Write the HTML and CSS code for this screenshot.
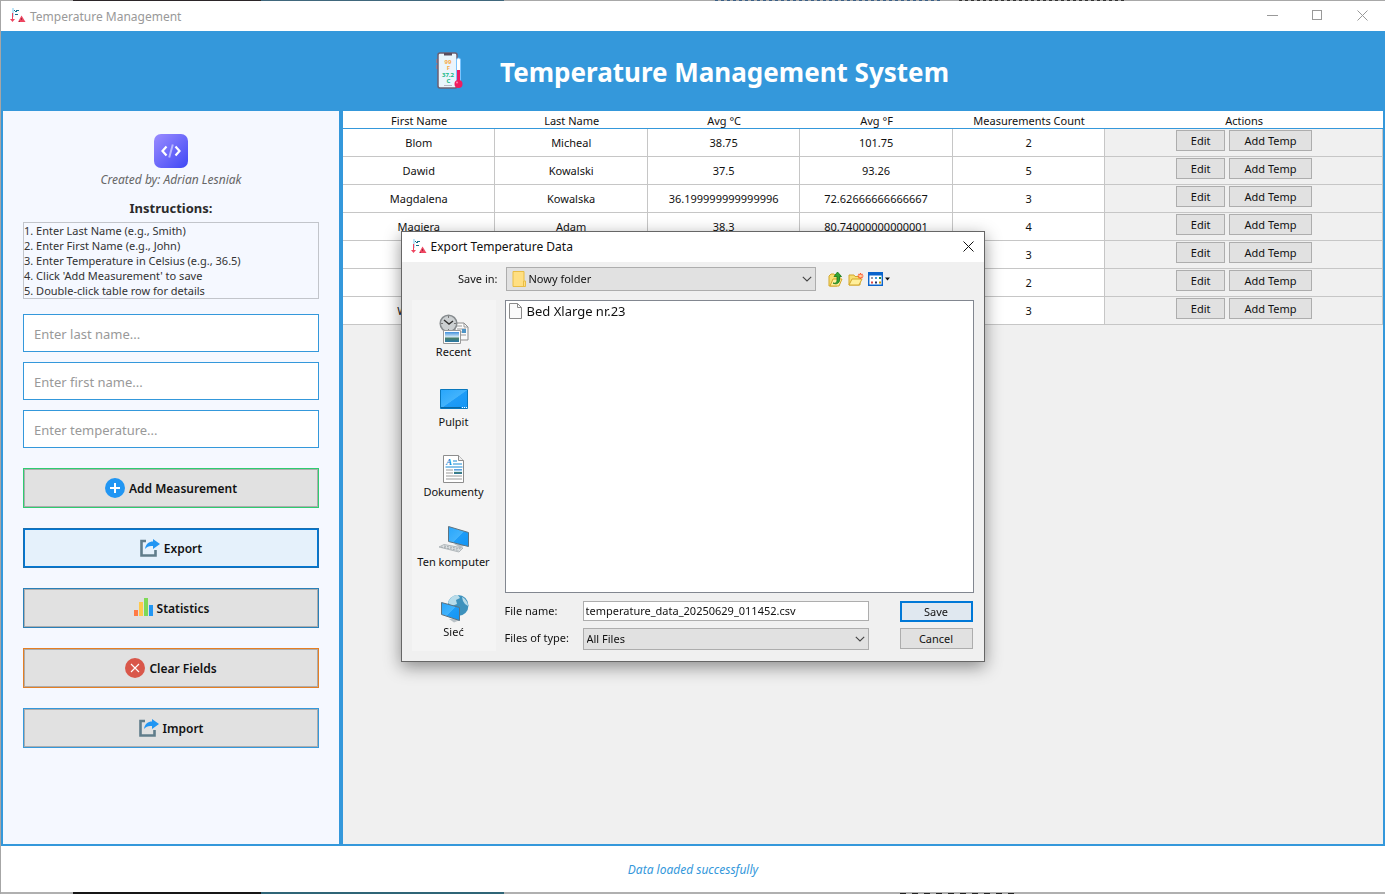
FILE: index.html
```html
<!DOCTYPE html>
<html lang="en">
<head>
<meta charset="utf-8">
<title>Temperature Management</title>
<link rel="stylesheet" href="styles.css">
</head>
<body>
<svg class="defs" aria-hidden="true">
  <symbol id="app" viewBox="0 0 16 16">
    <rect x="2" y="0" width="2" height="9" fill="#bfe6f8"/><rect x="2" y="5" width="1" height="7" fill="#ee4560"/><path d="M0 11h5l-2.500 3z" fill="#ee4560"/>
    <path d="M4 2h1v1H4zM6 2h3v1H6zM5 3h2v1H5zM5 6h3v1H5z" fill="#17708a"/><path d="M8 14l3.500-6.500L15.500 14z" fill="#ee4560"/><path d="M11 10h1v2h-1zM9 13h1v1H9z" fill="#a12c44"/>
  </symbol>
  <symbol id="share" viewBox="0 0 20 20">
    <path d="M6 3H1.500v14.500h14V12" fill="none" stroke="#607d8b" stroke-width="2.600"/>
    <path d="M5 11C6 5.500 9 3.500 13 3.500V1l7 5-7 5V8C9.500 7.500 7 8.500 5 11z" fill="#2196f3"/>
  </symbol>
  <symbol id="x" viewBox="0 0 11 11"><path d="M.5.5l10 10M10.500.5l-10 10" fill="none" stroke="currentColor"/></symbol>
  <symbol id="chevron" viewBox="0 0 10 6"><path d="M.8.8L5 5 9.200.8" fill="none" stroke="#444" stroke-width="1.100"/></symbol>
  <linearGradient id="blue" x1="0" y1="0" x2="1" y2="1"><stop offset="0" stop-color="#27a5fb"/><stop offset=".5" stop-color="#42b3fc"/><stop offset=".52" stop-color="#1e9cf7"/><stop offset="1" stop-color="#1295f5"/></linearGradient>
  <linearGradient id="photo" x1="0" y1="0" x2="0" y2="1"><stop offset="0" stop-color="#3f8fdc"/><stop offset=".5" stop-color="#d7ebf5"/><stop offset=".6" stop-color="#4c8068"/><stop offset="1" stop-color="#2a78a8"/></linearGradient>
</svg>

<div class="window">
  <div class="titlebar">
    <svg class="app-icon"><use href="#app"/></svg>
    <span class="titlebar-text">Temperature Management</span>
    <button class="caption" aria-label="Minimize"><svg viewBox="0 0 11 11"><path d="M0 5.500h11" stroke="currentColor"/></svg></button>
    <button class="caption" aria-label="Maximize"><svg viewBox="0 0 11 11"><rect x=".5" y=".5" width="9" height="9" fill="none" stroke="currentColor"/></svg></button>
    <button class="caption" aria-label="Close"><svg><use href="#x"/></svg></button>
  </div>

  <header class="banner">
    <svg class="banner-icon" viewBox="0 0 28 38">
      <rect x="0" y="7" width="3" height="4" fill="#8c7f96"/><rect x="0" y="13" width="3" height="4" fill="#8c7f96"/>
      <rect x="2" y="1" width="19" height="35" rx="2" fill="#eaf5fc" stroke="#6d5f70" stroke-width="1.500"/>
      <path d="M8 1h8v2.500H8z" fill="#5a4c5c"/>
      <g font-family="Noto Sans" font-weight="700" text-anchor="middle"><text x="12" y="12" font-size="6" fill="#f6a945">99</text><text x="12.500" y="18" font-size="6" fill="#f6a945">F</text><text x="12" y="24.500" font-size="6" fill="#12b886">37.2</text><text x="12.500" y="31" font-size="6" fill="#12b886">C</text></g>
      <path d="M8 33.500h8" stroke="#b9b5c4"/>
      <rect x="20.500" y="6" width="4" height="26" rx="2" fill="#fff" stroke="#79c4ff"/><rect x="21" y="18" width="3" height="14" fill="#e91e63"/><circle cx="22.500" cy="32" r="4" fill="#f01c5f"/><circle cx="21" cy="30.500" r="1" fill="#ff86aa"/>
    </svg>
    <h1>Temperature Management System</h1>
  </header>

  <div class="main">
    <aside class="sidebar">
      <svg class="logo" viewBox="0 0 34 34">
        <linearGradient id="purple" x1="0" y1="0" x2="1" y2="1"><stop offset="0" stop-color="#9b8cff"/><stop offset="1" stop-color="#3f48f5"/></linearGradient>
        <rect width="34" height="34" rx="7" fill="url(#purple)"/>
        <path d="M12.500 12.500L8.500 17l4 4.500M21.500 12.500l4 4.500-4 4.500" fill="none" stroke="#fff" stroke-width="2.200"/><path d="M18.800 10.500l-3.600 13" stroke="#b9b8ff" stroke-width="2"/>
      </svg>
      <p class="author">Created by: Adrian Lesniak</p>
      <h2>Instructions:</h2>
      <div class="instructions">1. Enter Last Name (e.g., Smith)<br>2. Enter First Name (e.g., John)<br>3. Enter Temperature in Celsius (e.g., 36.5)<br>4. Click 'Add Measurement' to save<br>5. Double-click table row for details</div>
      <div class="fields">
        <input type="text" aria-label="Last name" placeholder="Enter last name...">
        <input type="text" aria-label="First name" placeholder="Enter first name...">
        <input type="text" aria-label="Temperature" placeholder="Enter temperature...">
      </div>
      <div class="commands">
        <button class="command add"><svg viewBox="0 0 20 20"><circle cx="10" cy="10" r="10" fill="#2196f3"/><path d="M10 5v10M5 10h10" stroke="#fff" stroke-width="2"/></svg>Add Measurement</button>
        <button class="command export"><svg><use href="#share"/></svg>Export</button>
        <button class="command stats"><svg viewBox="0 0 20 20"><rect x="1" y="12" width="4" height="6" fill="#ff7a45"/><rect x="6" y="4" width="4" height="14" fill="#ffc94d"/><rect x="11" y="0" width="4" height="18" fill="#7ed957"/><rect x="16" y="7" width="4" height="11" fill="#2196f3"/></svg>Statistics</button>
        <button class="command clear"><svg viewBox="0 0 20 20"><circle cx="10" cy="10" r="10" fill="#d9574a"/><path d="M6 6l8 8M14 6l-8 8" stroke="#fff" stroke-width="1.100"/></svg>Clear Fields</button>
        <button class="command import"><svg><use href="#share"/></svg>Import</button>
      </div>
    </aside>

    <section class="records">
      <table>
        <colgroup><col class="data"><col class="data"><col class="data"><col class="data"><col class="data"><col></colgroup>
        <thead><tr><th>First Name</th><th>Last Name</th><th>Avg °C</th><th>Avg °F</th><th>Measurements Count</th><th>Actions</th></tr></thead>
        <tbody>
          <tr><td>Blom</td><td>Micheal</td><td>38.75</td><td>101.75</td><td>2</td><td class="actions"><div><button>Edit</button><button>Add Temp</button></div></td></tr>
          <tr><td>Dawid</td><td>Kowalski</td><td>37.5</td><td>93.26</td><td>5</td><td class="actions"><div><button>Edit</button><button>Add Temp</button></div></td></tr>
          <tr><td>Magdalena</td><td>Kowalska</td><td>36.199999999999996</td><td>72.62666666666667</td><td>3</td><td class="actions"><div><button>Edit</button><button>Add Temp</button></div></td></tr>
          <tr><td>Magiera</td><td>Adam</td><td>38.3</td><td>80.74000000000001</td><td>4</td><td class="actions"><div><button>Edit</button><button>Add Temp</button></div></td></tr>
          <tr><td></td><td></td><td></td><td></td><td>3</td><td class="actions"><div><button>Edit</button><button>Add Temp</button></div></td></tr>
          <tr><td></td><td></td><td></td><td></td><td>2</td><td class="actions"><div><button>Edit</button><button>Add Temp</button></div></td></tr>
          <tr><td>Wiktoria</td><td></td><td></td><td></td><td>3</td><td class="actions"><div><button>Edit</button><button>Add Temp</button></div></td></tr>
        </tbody>
      </table>
    </section>
  </div>
  <footer>Data loaded successfully</footer>
</div>

<div class="overlay">
  <div class="dialog" role="dialog" aria-labelledby="dialog-title">
    <div class="dialog-title">
      <svg class="app-icon"><use href="#app"/></svg>
      <span id="dialog-title">Export Temperature Data</span>
      <button class="dialog-close" aria-label="Close"><svg><use href="#x"/></svg></button>
    </div>
    <div class="dialog-body">
      <div class="location">
        <label for="folder">Save in:</label>
        <div class="select folder-select">
          <svg class="folder-icon" viewBox="0 0 14 16"><path d="M1 .5h11V10h1.500v5.500H1z" fill="#ffdf82" stroke="#e9bd45"/><path d="M11.500 10v5" stroke="#e9bd45"/></svg>
          <select id="folder"><option>Nowy folder</option></select>
          <svg class="chevron"><use href="#chevron"/></svg>
        </div>
        <div class="tools">
          <button aria-label="Up one level"><svg viewBox="0 0 16 16"><path d="M1 15V5l2-2h3l1 1h5v8l-3 3z" fill="#f7df72" stroke="#d3a72c"/><path d="M2 15l3-7h9l-3 7z" fill="#ffef9b" stroke="#d3a72c"/><path d="M5 12c3 1 4-1 4-3V5.500H6L9.500 1l4 4.500h-2V9c0 3-3 5-6.500 3z" fill="#32a633" stroke="#16771b" stroke-width=".8"/></svg></button>
          <button aria-label="Create new folder"><svg viewBox="0 0 16 16"><path d="M1 14V4h5l1 1.500h5V14z" fill="#f7df72" stroke="#d3a72c"/><path d="M1 14l3-6h10l-3 6z" fill="#ffef9b" stroke="#d3a72c"/><path d="M12.500 2v6M9.500 5h6M10.500 3l4 4M14.500 3l-4 4" stroke="#ff5a2c" stroke-width="1.200"/><circle cx="12.500" cy="5" r="1.500" fill="#ffd2a0"/></svg></button>
          <button class="view" aria-label="View menu"><svg viewBox="0 0 22 16"><path d="M.7 1.700h13.600v12.600H.7z" fill="#fff" stroke="#0a64cc" stroke-width="1.400"/><path d="M0 1h15v3.500H0z" fill="#0a64cc"/><g stroke-width="2"><path d="M3 7h2" stroke="#99a"/><path d="M7 7h2" stroke="#49d"/><path d="M11 7h2" stroke="#284"/><path d="M3 11.500h2" stroke="#d44"/><path d="M7 11.500h2" stroke="#236"/><path d="M11 11.500h2" stroke="#c90"/></g><path d="M17 6.500h5l-2.500 3z" fill="#111"/></svg></button>
        </div>
      </div>
      <div class="browser">
        <nav class="places">
          <button><svg viewBox="0 0 32 32"><path d="M17 10h9l4 4v13H17z" fill="#fafafa" stroke="#8d8d8d"/><path d="M26 10v4h4M19 13h5M19 16h9M19 19h9M19 22h9" fill="none" stroke="#999"/><path d="M24 16h4v4h-4z" fill="#4d94c6"/><circle cx="10.500" cy="10.500" r="8.300" fill="#ccd0d2" stroke="#878c8f" stroke-width="1.500"/><path d="M6 7l5 4 4-3" fill="none" stroke="#333" stroke-width="1.400"/><path d="M10.500 3v2M10.500 16v2M3 10.500h2M16 10.500h2" stroke="#777"/><path d="M5.500 17.500h17v13h-17z" fill="#fff" stroke="#999"/><path d="M7 19h14v10H7z" fill="url(#photo)"/></svg>Recent</button>
          <button><svg viewBox="0 0 32 32"><path d="M2.500 6.500h27v19h-27z" fill="url(#blue)" stroke="#0877bd"/><path d="M3 24.500h20" stroke="#0867a3"/><path d="M24 24.500h5" stroke="#fff" stroke-dasharray="1 1"/></svg>Pulpit</button>
          <button><svg viewBox="0 0 32 32"><path d="M5.500 2.500h15l5 5v22h-20z" fill="#fff" stroke="#8d8d8d"/><path d="M20.500 2.500v5h5" fill="#eee" stroke="#8d8d8d"/><text x="8" y="11.500" font-family="Liberation Serif" font-size="9" font-weight="700" font-style="italic" fill="#1689d4">A</text><path d="M15 8h4M15 11h9M7.500 14h17" stroke="#1689d4"/><path d="M8 17h7M8 20h7M8 23h16M8 26h16" stroke="#999"/><path d="M16 16h8v5h-8z" fill="url(#photo)"/></svg>Dokumenty</button>
          <button><svg viewBox="0 0 32 32"><path d="M16 21l9-1 3 2-6 2.500z" fill="#b9c1c6"/><path d="M10.500 3.500l20 6v14l-20-5z" fill="url(#blue)" stroke="#5e7380"/><path d="M1 24l5-2.500 19 3.500-4 4z" fill="#e0e4e6" stroke="#a2a9ad" stroke-width=".8"/><path d="M3 24l18 3.500M6 23l17 3" stroke="#a2a9ad" stroke-dasharray="2 1"/></svg>Ten komputer</button>
          <button><svg viewBox="0 0 32 32"><circle cx="20" cy="12.500" r="10.500" fill="#3e92bd"/><path d="M10 10c2-6 6-8 10-8l2 3-4 2 1 4-5 2zM24 4c4 2 6 6 6 9l-3-2-2-3z" fill="#b8dcea"/><path d="M11 26l8-1 3 2-6 2.500z" fill="#b9c1c6"/><path d="M3.500 9.500l18 5v13l-18-6z" fill="url(#blue)" stroke="#5e7380"/></svg>Sieć</button>
        </nav>
        <div class="pane">
          <ul class="files"><li><svg viewBox="0 0 13 16"><path d="M.5.5h8l4 4v11H.5z" fill="#fafafa" stroke="#8a8a8a"/><path d="M8.500.5v4h4" fill="none" stroke="#8a8a8a"/></svg>Bed Xlarge nr.23</li></ul>
          <div class="save-form">
            <label for="filename">File name:</label>
            <input id="filename" type="text" value="temperature_data_20250629_011452.csv">
            <button class="primary">Save</button>
            <label for="filetype">Files of type:</label>
            <div class="select"><select id="filetype"><option>All Files</option></select><svg class="chevron"><use href="#chevron"/></svg></div>
            <button>Cancel</button>
          </div>
        </div>
      </div>
    </div>
  </div>
</div>
</body>
</html>
```
FILE: styles.css
```css
* { box-sizing: border-box; }
body {
  margin: 0;
  font-family: "Noto Sans", "Open Sans", sans-serif;
  font-size: 11px;
  color: #111;
}
h1, h2, p, ul { margin: 0; padding: 0; }
button, input, select { font: inherit; color: inherit; margin: 0; border-radius: 0; }
svg { display: block; flex: none; }
.defs { position: absolute; width: 0; height: 0; }

.window {
  display: flex;
  flex-direction: column;
  min-height: 100vh;
  border-left: 1px solid #a6a6a6;
  background: #fff;
}
.window::before, .window::after { content: ""; height: 1px; }
.window::before {
  background:
    repeating-linear-gradient(to right, #3a5f86 0 3px, #a8a8a8 3px 6px) 714px 0 / 228px 1px no-repeat,
    repeating-linear-gradient(to right, #333 0 3px, #a8a8a8 3px 6px) 958px 0 / 166px 1px no-repeat,
    linear-gradient(to right, #a8a8a8 72px, #2b2528 72px 260px, #40677c 260px 503px, #a8a8a8 503px);
}
.window::after {
  height: 2px;
  background:
    repeating-linear-gradient(to right, #222 0 6px, #b0b0b0 6px 12px) 899px 1px / 119px 1px no-repeat,
    linear-gradient(to right, #b0b0b0 72px, #161616 72px 260px, #2f6577 260px 503px, #b0b0b0 503px);
}

.titlebar { display: flex; align-items: center; height: 30px; padding-left: 9px; color: #999; font-size: 12px; }
.app-icon { width: 16px; height: 16px; }
.titlebar-text { flex: 1; padding-left: 4px; }
.caption { display: grid; place-items: center; width: 45px; height: 30px; padding: 0 0 1px; border: 0; background: none; }
.caption svg { width: 11px; height: 11px; }

.banner { display: flex; align-items: center; justify-content: center; gap: 36px; height: 80px; padding-right: 1px; background: #3498db; color: #fff; }
.banner-icon { width: 28px; height: 38px; }
.banner h1 { padding-top: 2px; font-size: 26px; line-height: 36px; }

.main { display: flex; flex: 1; }
.sidebar {
  flex: none;
  width: 340px;
  padding: 23px 20px;
  border: 2px solid #3498db;
  border-top: 0;
  background: #f5f8ff;
  text-align: center;
}
.logo { width: 34px; height: 34px; margin: 0 auto; }
.author { margin-top: 3px; font-size: 12px; line-height: 18px; font-style: italic; color: #666; }
.sidebar h2 { margin-top: 10px; font-size: 13px; line-height: 18px; color: #2b2b2b; }
.instructions {
  margin-top: 5px;
  border: 1px solid #c2c5cb;
  color: #333;
  font-size: 11px;
  line-height: 15px;
  text-align: left;
}
.fields { display: grid; gap: 10px; margin-top: 15px; }
.fields input { width: 100%; height: 38px; padding: 2px 10px 0; border: 1px solid #3498db; background: #fff; font-size: 13px; }
.fields input::placeholder { color: #999; opacity: 1; }
.commands { display: grid; gap: 20px; margin-top: 20px; }
.command {
  display: flex;
  align-items: center;
  justify-content: center;
  gap: 4px;
  height: 40px;
  border: 1px solid #3498db;
  background: #e1e1e1;
  box-shadow: inset 0 0 0 1px #adadad;
  font-size: 12px;
  font-weight: 600;
}
.command svg { width: 20px; height: 20px; }
.command.add { border-color: #2ecc71; }
.command.export { border-color: #1a6fb0; background: #e5f1fb; box-shadow: inset 0 0 0 1px #0078d7; }
.command.stats { border-color: #2980b9; }
.command.clear { border-color: #e67e22; }

.records { flex: 1; border: 2px solid #3498db; border-top: 0; background: #f0f0f0; }
table { width: 100%; table-layout: fixed; border-collapse: separate; border-spacing: 0; font-size: 11px; line-height: 16px; }
.data { width: 14.66%; }
th { height: 18px; padding: 2px 0 0; border-bottom: 1px solid #3498db; background: #fff; font-weight: 400; line-height: 15px; }
td { height: 28px; padding: 0; border-right: 1px solid #c6c6c6; border-bottom: 1px solid #c6c6c6; background: #fff; text-align: center; }
td.actions { background: #f0f0f0; }
.actions div { display: flex; justify-content: center; gap: 4px; padding-bottom: 4px; }
.actions button { height: 21px; padding: 0 14px; border: 1px solid #adadad; background: #e1e1e1; line-height: 18px; }

footer { display: grid; place-items: center; height: 46px; color: #3498db; font-size: 12px; font-style: italic; }

.overlay { position: fixed; inset: 0; display: grid; place-items: center; padding-bottom: 2px; }
.dialog { width: 584px; border: 1px solid #666; background: #f0f0f0; box-shadow: 0 5px 16px rgba(0, 0, 0, .42); }
.dialog-title { display: flex; align-items: center; height: 30px; padding-left: 9px; background: #fff; font-size: 12px; }
.dialog-title span { flex: 1; padding-left: 4px; }
.dialog-close { display: grid; place-items: center; width: 30px; height: 30px; padding: 0; border: 0; background: none; }
.dialog-close svg { width: 11px; height: 11px; }
.dialog-body { padding: 5px 10px 10px; }
.location { display: flex; align-items: center; }
.location label { width: 86px; text-align: right; }
.select { display: grid; align-items: center; border: 1px solid #adadad; background: #e1e1e1; }
.select > * { grid-area: 1 / 1; }
.select select { width: 100%; height: 20px; padding: 0 3px; border: 0; background: none; appearance: none; }
.folder-select { width: 310px; margin-left: 8px; }
.folder-select select { height: 22px; padding-left: 22px; }
.folder-icon { width: 14px; height: 16px; margin-left: 5px; }
.chevron { width: 10px; height: 6px; margin-right: 3px; justify-self: end; pointer-events: none; }
.tools { display: flex; gap: 4px; margin-left: 12px; }
.tools button { padding: 0; border: 0; background: none; }
.tools svg { width: 16px; height: 16px; }
.tools .view svg { width: 22px; }
.browser { display: flex; gap: 9px; margin-top: 9px; }
.places { display: flex; flex-direction: column; gap: 24px; width: 84px; flex: none; padding: 13px 0 12px; background: #f4f4f4; }
.places button { display: flex; flex-direction: column; align-items: center; height: 46px; padding: 0; border: 0; background: none; line-height: 14px; }
.places svg { width: 32px; height: 32px; }
.pane { flex: 1; }
.files { height: 293px; padding: 2px 3px; border: 1px solid #828790; background: #fff; list-style: none; font-size: 13px; }
.files li { display: flex; align-items: center; gap: 5px; line-height: 16px; }
.files svg { width: 13px; height: 16px; }
.save-form { display: grid; grid-template-columns: 78px 1fr 73px; row-gap: 6px; margin-top: 8px; padding-right: 1px; align-items: start; }
.save-form label { line-height: 19px; }
.save-form input { width: 100%; height: 20px; padding: 0 2px; border: 1px solid #adadad; background: #fff; }
.save-form button { height: 21px; padding: 0; border: 1px solid #adadad; background: #e1e1e1; line-height: 17px; }
.save-form button.primary { border: 2px solid #0078d7; background: #e0e8f0; }
.save-form input, .save-form .select { width: calc(100% - 31px); }
```
